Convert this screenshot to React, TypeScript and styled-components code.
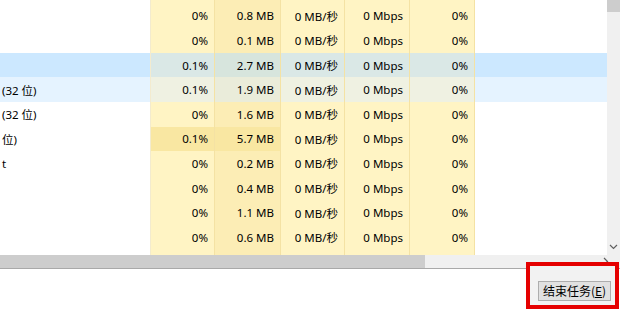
import styled, { createGlobalStyle } from 'styled-components';

type RowState = 'normal' | 'selected' | 'hover';

interface Proc {
  name: string;
  cpu: string;
  mem: string;
  disk?: string;
  net?: string;
  gpu?: string;
  hotCpu?: boolean;
  hotMem?: boolean;
  state?: RowState;
}

// first entry is the row scrolled almost out of view: only its bottom edge shows
const rows: Proc[] = [
  { name: '', cpu: '', mem: '', disk: '', net: '', gpu: '' },
  { name: '', cpu: '0%', mem: '0.8 MB' },
  { name: '', cpu: '0%', mem: '0.1 MB' },
  { name: '', cpu: '0.1%', mem: '2.7 MB', state: 'selected' },
  { name: '(32 位)', cpu: '0.1%', mem: '1.9 MB', state: 'hover' },
  { name: '(32 位)', cpu: '0%', mem: '1.6 MB' },
  { name: '位)', cpu: '0.1%', mem: '5.7 MB', hotCpu: true, hotMem: true },
  { name: 't', cpu: '0%', mem: '0.2 MB' },
  { name: '', cpu: '0%', mem: '0.4 MB' },
  { name: '', cpu: '0%', mem: '1.1 MB' },
  { name: '', cpu: '0%', mem: '0.6 MB' },
  { name: '', cpu: '', mem: '', disk: '', net: '', gpu: '' },
];

const GlobalStyle = createGlobalStyle`
  html, body {
    margin: 0;
    padding: 0;
    overflow: hidden;
    background: #ffffff;
  }
  body {
    font-family: "Noto Sans", "Noto Sans CJK SC", sans-serif;
    font-size: 11.5px;
    color: #000;
  }
`;

const Window = styled.div`
  width: 620px;
  height: 309px;
  display: flex;
  flex-direction: column;
  overflow: hidden;
`;

const Body = styled.div`
  height: 255px;
  display: flex;
`;

const List = styled.div`
  flex: 1;
  overflow: hidden;
`;

// list is scrolled: first row sits mostly above the top edge
const Rows = styled.div`
  margin-top: -21px;
`;

const bgFor = (state: RowState) =>
  state === 'selected' ? '#cce8ff' : state === 'hover' ? '#e5f3ff' : '#ffffff';

const Row = styled.div<{ $state: RowState }>`
  height: 24.6px;
  display: grid;
  grid-template-columns: 151px 64px 66px 64px 65px 65px 1fr;
  background: ${(p) => bgFor(p.$state)};
`;

const NameCell = styled.div`
  display: flex;
  align-items: center;
  padding-left: 2px;
  white-space: nowrap;
  overflow: hidden;
  border-right: 1px solid #f3ebcf;
`;

type Kind = 'base' | 'mem' | 'hot';

const cellBg = (state: RowState, kind: Kind) => {
  if (state === 'selected') return kind === 'mem' ? '#d7e5dd' : '#dae8e6';
  if (state === 'hover') return kind === 'mem' ? '#eaecda' : '#eff1e2';
  if (kind === 'hot') return '#f9e7a2';
  if (kind === 'mem') return '#fcedb5';
  return '#fff4c4';
};

const DataCell = styled.div<{ $state: RowState; $kind: Kind }>`
  display: flex;
  align-items: center;
  justify-content: flex-end;
  padding-right: 6px;
  white-space: nowrap;
  background: ${(p) => cellBg(p.$state, p.$kind)};
  border-right: 1px solid #f4e2a4;
`;

const Blank = styled.div``;

const VScroll = styled.div`
  width: 13px;
  background: #f0f0f0;
  display: flex;
  flex-direction: column;
  justify-content: space-between;
  align-items: center;
`;

const VThumb = styled.div`
  width: 13px;
  height: 12px;
  background: #cdcdcd;
`;

const Arrow = styled.svg`
  display: block;
  margin-bottom: 5px;
`;

const HScrollRow = styled.div`
  height: 13px;
  display: flex;
  background: #f0f0f0;
  border-bottom: 1px solid #a9a9a9;
`;

const HTrack = styled.div`
  width: 607px;
  display: flex;
  align-items: center;
  justify-content: space-between;
`;

const HThumb = styled.div`
  width: 425px;
  height: 13px;
  background: #cdcdcd;
`;

const Footer = styled.div`
  flex: 1;
  display: flex;
  justify-content: flex-end;
  align-items: flex-start;
  padding: 12px 9px 0 0;
  background: #ffffff;
`;

const ButtonWrap = styled.div`
  position: relative;
`;

// red annotation frame drawn over the footer
const Highlight = styled.div`
  position: absolute;
  left: -12px;
  right: -8px;
  top: -19px;
  bottom: -8px;
  border: 4px solid #e50000;
  background: #f2f2f2;
  z-index: 0;
`;

const EndButton = styled.button`
  position: relative;
  z-index: 1;
  width: 73px;
  height: 20px;
  padding: 0;
  background: #e1e1e1;
  border: 1px solid #adadad;
  font-family: "Noto Sans CJK SC", "Noto Sans", sans-serif;
  font-size: 12px;
  color: #000;
  line-height: 18px;
  u {
    text-decoration: underline;
    text-underline-offset: 1px;
  }
`;

export default function App() {
  return (
    <Window>
      <GlobalStyle />
      <Body>
        <List>
          <Rows>
            {rows.map((r, i) => {
              const st = r.state ?? 'normal';
              return (
                <Row key={i} $state={st}>
                  <NameCell>{r.name}</NameCell>
                  <DataCell $state={st} $kind={r.hotCpu ? 'hot' : 'base'}>{r.cpu}</DataCell>
                  <DataCell $state={st} $kind={r.hotMem ? 'hot' : 'mem'}>{r.mem}</DataCell>
                  <DataCell $state={st} $kind="base">{r.disk ?? '0 MB/秒'}</DataCell>
                  <DataCell $state={st} $kind="base">{r.net ?? '0 Mbps'}</DataCell>
                  <DataCell $state={st} $kind="base">{r.gpu ?? '0%'}</DataCell>
                  <Blank />
                </Row>
              );
            })}
          </Rows>
        </List>
        <VScroll>
          <VThumb />
          <Arrow width="9" height="6" viewBox="0 0 9 6">
            <path d="M1 1 L4.5 4.5 L8 1" fill="none" stroke="#606060" strokeWidth="1.2" />
          </Arrow>
        </VScroll>
      </Body>
      <HScrollRow>
        <HTrack>
          <HThumb />
          <svg width="6" height="9" viewBox="0 0 6 9" style={{ marginRight: -2 }}>
            <path d="M1 1 L4.5 4.5 L1 8" fill="none" stroke="#606060" strokeWidth="1.2" />
          </svg>
        </HTrack>
      </HScrollRow>
      <Footer>
        <ButtonWrap>
          <Highlight />
          <EndButton>
            结束任务(<u>E</u>)
          </EndButton>
        </ButtonWrap>
      </Footer>
    </Window>
  );
}
